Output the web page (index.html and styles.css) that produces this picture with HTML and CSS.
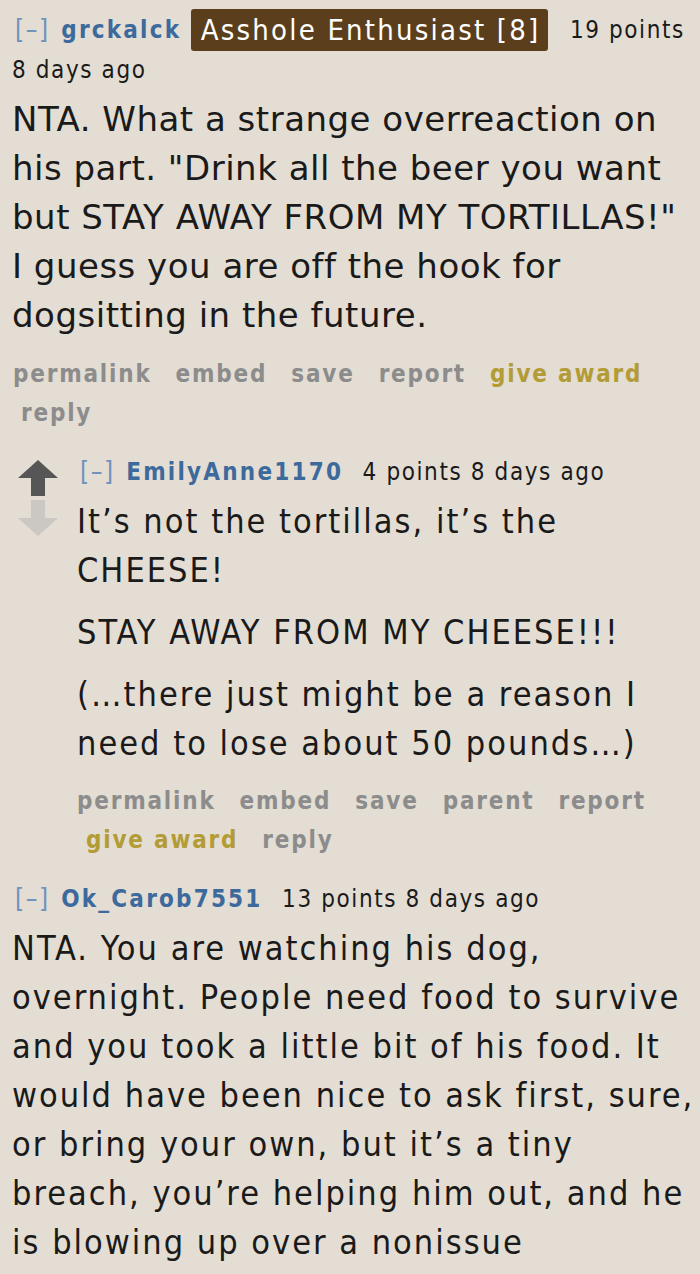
FILE: index.html
```html
<!DOCTYPE html>
<html lang="en">
<head>
  <meta charset="UTF-8" />
  <title>Comments</title>
  <link rel="stylesheet" href="styles.css">
</head>
<body>
  <div class="comment">
    <p class="tagline">
      <span class="expand">[–]</span>
      <span class="author">grckalck</span>
      <span class="flair">Asshole Enthusiast [8]</span>
      <span class="score">19 points</span>
      <span class="time">8 days ago</span>
    </p>
    <div class="md wide">
      <p>NTA. What a strange overreaction on his part. "Drink all the beer you want but STAY AWAY FROM MY TORTILLAS!" I guess you are off the hook for dogsitting in the future.</p>
    </div>
    <ul class="buttons">
      <li class="first">permalink</li>
      <li>embed</li>
      <li>save</li>
      <li>report</li>
      <li class="award">give award</li>
      <li>reply</li>
    </ul>

    <div class="child">
      <div class="midcol">
        <svg class="arrow" width="40" height="36" viewBox="0 0 40 36"><path d="M20 0 L40 18 L27 18 L27 36 L13 36 L13 18 L0 18 Z" fill="#565656"/></svg>
        <svg class="arrow" width="40" height="36" viewBox="0 0 40 36"><path d="M20 36 L40 18 L27 18 L27 0 L13 0 L13 18 L0 18 Z" fill="#cbc8c3"/></svg>
      </div>
      <div class="entry">
        <p class="tagline">
          <span class="expand">[–]</span>
          <span class="author">EmilyAnne1170</span>
          <span class="score">4 points</span>
          <span class="time">8 days ago</span>
        </p>
        <div class="md">
          <p>It’s not the tortillas, it’s the CHEESE!</p>
          <p>STAY AWAY FROM MY CHEESE!!!</p>
          <p>(…there just might be a reason I need to lose about 50 pounds…)</p>
        </div>
        <ul class="buttons">
          <li class="first">permalink</li>
          <li>embed</li>
          <li>save</li>
          <li>parent</li>
          <li>report</li>
          <li class="award">give award</li>
          <li>reply</li>
        </ul>
      </div>
    </div>
  </div>

  <div class="comment">
    <p class="tagline">
      <span class="expand">[–]</span>
      <span class="author">Ok_Carob7551</span>
      <span class="score">13 points</span>
      <span class="time">8 days ago</span>
    </p>
    <div class="md">
      <p>NTA. You are watching his dog, overnight. People need food to survive and you took a little bit of his food. It would have been nice to ask first, sure, or bring your own, but it’s a tiny breach, you’re helping him out, and he is blowing up over a nonissue</p>
    </div>
  </div>
</body>
</html>
```

FILE: styles.css
```css
html, body {
  margin: 0;
  background: #e3ddd3;
  color: #1a1a1a;
  font-family: 'DejaVu Sans Condensed', 'DejaVu Sans', sans-serif;
}

body {
  padding: 10px 2px 0 12px;
}

p {
  margin: 0;
}

.tagline {
  font-size: 24px;
  line-height: 39px;
  letter-spacing: 1.6px;
}

.expand {
  color: #7193bd;
  font-size: 26px;
  margin-left: 3px;
  margin-right: 3px;
}

.author {
  color: #3d6a9c;
  font-weight: bold;
  letter-spacing: 2.2px;
}

.score {
  margin-left: 11px;
}

.flair {
  display: inline-block;
  background: #5b3f1c;
  color: #fff;
  font-size: 29px;
  line-height: 42px;
  letter-spacing: 2.2px;
  padding: 0 8px 0 10px;
  border-radius: 3px;
  margin-right: 2px;
  margin-left: 1px;
  vertical-align: middle;
  margin-top: -3px;
}

.md {
  font-size: 34px;
  line-height: 49px;
  letter-spacing: 2px;
  margin-top: 5px;
}

.md.wide {
  font-family: 'DejaVu Sans', sans-serif;
  font-size: 34px;
  letter-spacing: 0.5px;
}

.md p + p {
  margin-top: 13px;
}

.buttons {
  list-style: none;
  margin: 15px 0 0;
  padding: 0;
  display: flex;
  flex-wrap: wrap;
  font-size: 24px;
  font-weight: bold;
  line-height: 39px;
  letter-spacing: 1.8px;
  color: #8c8c8c;
}

.buttons li {
  padding-left: 9px;
  margin-right: 15px;
}

.buttons li.first {
  padding-left: 1px;
}

.buttons .award {
  color: #b39b36;
}

.child {
  display: flex;
  margin-top: 19px;
}

.midcol {
  display: flex;
  flex-direction: column;
  gap: 4px;
  width: 59px;
  padding: 8px 0 0 6px;
}

.entry {
  flex: 1;
}

.entry .md {
  margin-top: 5px;
}

.entry .buttons {
  margin-top: 14px;
}

.entry .buttons li.first {
  padding-left: 0;
}

.comment + .comment {
  margin-top: 19px;
}
```
